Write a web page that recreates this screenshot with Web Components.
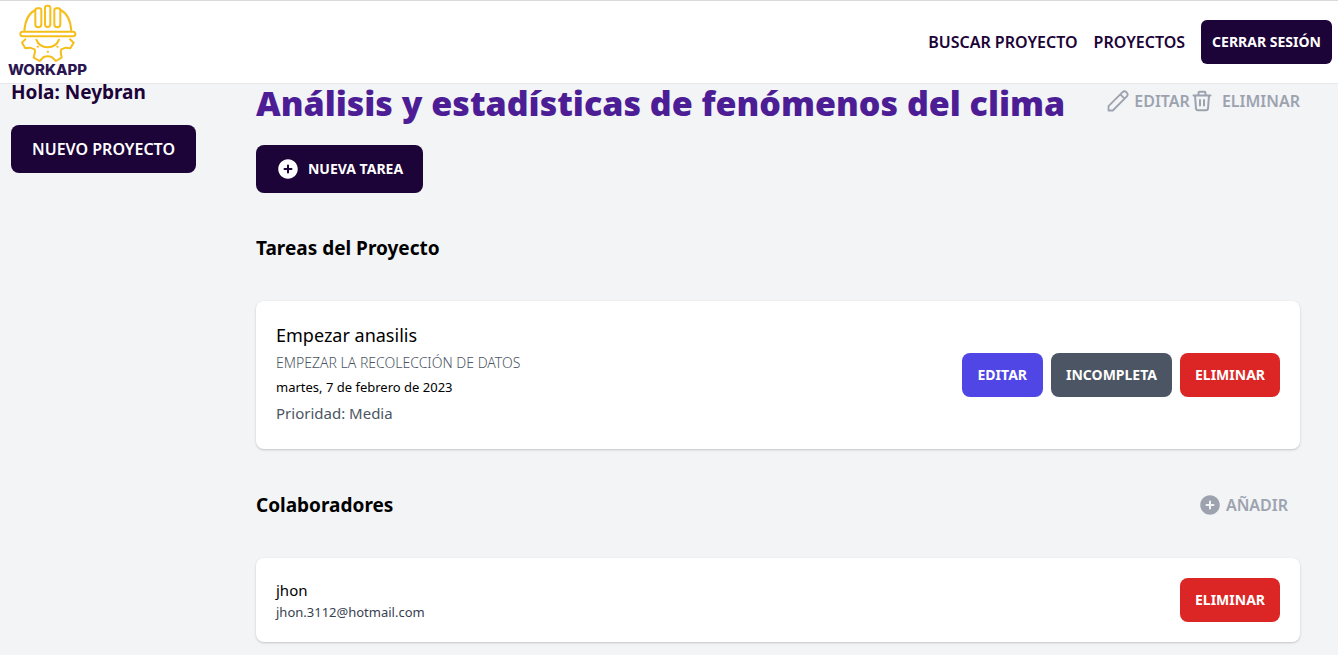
<!DOCTYPE html>
<html lang="es">
<head>
<meta charset="utf-8">
<meta name="viewport" content="width=device-width, initial-scale=1">
<title>WorkApp</title>
<style>
  body { margin: 0; background: #f3f4f6; color: #000; font-family: "Noto Sans", "Open Sans", sans-serif; font-size: 16px; line-height: 24px; }
</style>
</head>
<body>
<work-page></work-page>

<script>
const define = (name, html) => {
  const template = document.createElement('template');
  template.innerHTML = '<style>*{box-sizing:border-box}h1,h2,p{margin:0}button{font-family:inherit;border:0;cursor:pointer}</style>' + html;
  customElements.define(name, class extends HTMLElement {
    constructor() {
      super();
      this.attachShadow({ mode: 'open' }).append(template.content.cloneNode(true));
    }
  });
};

define('work-logo', `
<style>
  :host { display: block; padding-bottom: 4px; }
  a { display: flex; flex-direction: column; align-items: center; color: #2a1650; text-decoration: none; font: 800 15px/12px Inter, sans-serif; }
  svg { display: block; }
</style>
<a href="#">
  <svg width="60" height="60" viewBox="54 12 180 180" fill="none" stroke="#f5be1b" stroke-width="6" stroke-linecap="round" stroke-linejoin="round" aria-hidden="true">
    <rect x="61" y="95" width="165" height="14" rx="7"/>
    <path d="M73 93C75 64 86 40 106 30M182 30C202 40 212 64 214 93"/>
    <path d="M106 73V31Q106 25 112 25H118Q124 25 124 31V73A9 9 0 0 1 106 73ZM135 73V23Q135 17 143 17Q151 17 151 23V73A8 8 0 0 1 135 73ZM163 73V31Q163 25 169 25H175Q181 25 181 31V73A9 9 0 0 1 163 73Z"/>
    <path d="M76 118L66 128L76 145L90 143L104 148L105 156L101 173L119 183L131 171Q143 166 155 171L168 183L185 173L182 156L184 148L197 143L211 145L221 128L210 118"/>
    <path d="M109 119C120 149 166 149 177 119M113 140H114M143 155H144M172 140H173"/>
  </svg>
  <span>WORKAPP</span>
</a>`);

define('work-header', `
<style>
  header { display: flex; justify-content: space-between; align-items: center; height: 84px; padding: 0 6px 0 8px; background: #fff; border-top: 1px solid #d9d9d9; border-bottom: 1px solid #e5e7eb; }
  nav { display: flex; align-items: center; gap: 16px; }
  a { color: #1c0338; font-weight: 600; text-decoration: none; text-transform: uppercase; }
</style>
<header>
  <work-logo></work-logo>
  <nav>
    <a href="#">Buscar Proyecto</a>
    <a href="#">Proyectos</a>
    <work-button class="compact">Cerrar Sesión</work-button>
  </nav>
</header>`);

define('work-button', `
<style>
  :host { display: block; --bg: #1c0338; --pad: 12px 16px; --size: 14px; --weight: 700; --radius: 8px; }
  :host(.compact) { --pad: 12px 11px; --radius: 6px; }
  :host(.wide) { --pad: 12px 20px; --size: 16px; --weight: 600; }
  :host(.tall) { --pad: 12px 20px; }
  :host(.indigo) { --bg: #4f46e5; }
  :host(.slate) { --bg: #4b5563; --pad: 12px 15px; }
  :host(.red) { --bg: #dc2626; --pad: 12px 15px; }
  button { display: flex; align-items: center; justify-content: center; gap: 8px; width: 100%; padding: var(--pad); background: var(--bg); color: #fff; border-radius: var(--radius); font-size: var(--size); font-weight: var(--weight); line-height: 20px; text-transform: uppercase; white-space: nowrap; }
  :host(.wide) button { line-height: 24px; }
</style>
<button type="button"><slot name="icon"></slot><slot></slot></button>`);

define('work-action', `
<style>
  :host { display: block; }
  button { display: flex; align-items: center; gap: var(--gap, 4px); padding: 0; background: none; color: #9ca3af; font-size: 16px; font-weight: 600; line-height: 24px; text-transform: uppercase; }
</style>
<button type="button"><slot name="icon"></slot><slot></slot></button>`);

define('icon-plus', `
<style>:host, svg { display: block; }</style>
<svg width="24" height="24" viewBox="0 0 24 24" fill="currentColor" aria-hidden="true"><path fill-rule="evenodd" d="M12 2.25c-5.385 0-9.75 4.365-9.75 9.75s4.365 9.75 9.75 9.75 9.75-4.365 9.75-9.75S17.385 2.25 12 2.25zM13 8.5a1 1 0 00-2 0V11H8.5a1 1 0 000 2H11v2.5a1 1 0 002 0V13h2.5a1 1 0 000-2H13V8.5z" clip-rule="evenodd"/></svg>`);

define('icon-pencil', `
<style>:host, svg { display: block; }</style>
<svg width="24" height="24" viewBox="0 0 24 24" fill="none" stroke="currentColor" stroke-width="1.8" stroke-linejoin="round" aria-hidden="true"><path d="M2.5 21.500V17.200L16.300 3.300A2.900 2.900 0 0 1 20.600 7.600L6.800 21.500ZM14.300 5.300L18.600 9.600"/></svg>`);

define('icon-trash', `
<style>:host, svg { display: block; }</style>
<svg width="24" height="24" viewBox="0 0 24 24" fill="none" stroke="currentColor" stroke-width="2" stroke-linecap="round" stroke-linejoin="round" aria-hidden="true"><path d="M3.500 6.500H20.500M5 6.500L6 19.500Q6.200 21.200 8 21.200H16Q17.800 21.200 18 19.500L19 6.500M8.500 6.500V4Q8.500 2.800 9.700 2.800H14.300Q15.500 2.800 15.500 4V6.500M10 11V16.500M14 11V16.500"/></svg>`);

define('work-sidebar', `
<style>
  :host { display: block; padding-left: 11px; }
  p { font-size: 19px; font-weight: 700; line-height: 17px; color: #1c0338; }
  work-button { width: 185px; margin-top: 24px; }
</style>
<aside>
  <p>Hola: <slot></slot></p>
  <work-button class="wide">Nuevo Proyecto</work-button>
</aside>`);

define('work-section-title', `
<style>
  :host { display: flex; justify-content: space-between; align-items: center; height: 28px; padding-right: 12px; }
  h2 { font-size: 19px; font-weight: 700; line-height: 28px; }
</style>
<h2><slot></slot></h2><slot name="action"></slot>`);

define('work-card', `
<style>
  :host { display: flex; justify-content: space-between; align-items: center; gap: 16px; padding: 20px; background: #fff; border-radius: 8px; box-shadow: 0 1px 3px rgba(0,0,0,.1), 0 1px 2px rgba(0,0,0,.1); }
  .actions { display: flex; gap: 8px; }
</style>
<div><slot></slot></div>
<div class="actions"><slot name="actions"></slot></div>`);

define('work-task', `
<style>
  :host { display: block; }
  p { margin-bottom: 4px; }
  .name { font-size: 18px; line-height: 28px; }
  .detail { font-size: 14px; font-weight: 300; line-height: 20px; color: #4b5563; text-transform: uppercase; }
  .date { font-size: 13px; line-height: 20px; }
  .priority { font-size: 15px; line-height: 24px; color: #4b5563; }
</style>
<work-card>
  <p class="name"><slot name="name"></slot></p>
  <p class="detail"><slot name="detail"></slot></p>
  <p class="date"><slot name="date"></slot></p>
  <p class="priority">Prioridad: <slot name="priority"></slot></p>
  <work-button slot="actions" class="indigo">Editar</work-button>
  <work-button slot="actions" class="slate">Incompleta</work-button>
  <work-button slot="actions" class="red">Eliminar</work-button>
</work-card>`);

define('work-collaborator', `
<style>
  :host { display: block; }
  .name { font-size: 15px; line-height: 24px; }
  .mail { font-size: 13px; line-height: 20px; color: #374151; }
</style>
<work-card>
  <p class="name"><slot name="name"></slot></p>
  <p class="mail"><slot name="mail"></slot></p>
  <work-button slot="actions" class="red">Eliminar</work-button>
</work-card>`);

define('work-project', `
<style>
  :host { display: block; }
  .top { display: flex; justify-content: space-between; align-items: flex-start; height: 38px; }
  h1 { font-size: 34px; font-weight: 900; line-height: 38px; color: #4c1d95; }
  .actions { display: flex; padding-top: 5px; }
  .new { width: 167px; margin: 23px 0 41px; }
  .tasks { margin: 39px 0 42px; }
  .people { margin-top: 39px; }
</style>
<div class="top">
  <h1><slot></slot></h1>
  <div class="actions">
    <work-action><icon-pencil slot="icon"></icon-pencil>Editar</work-action>
    <work-action style="--gap: 8px"><icon-trash slot="icon"></icon-trash>Eliminar</work-action>
  </div>
</div>
<work-button class="tall new"><icon-plus slot="icon"></icon-plus>Nueva Tarea</work-button>
<work-section-title>Tareas del Proyecto</work-section-title>
<work-task class="tasks">
  <span slot="name">Empezar anasilis</span>
  <span slot="detail">Empezar la recolección de datos</span>
  <span slot="date">martes, 7 de febrero de 2023</span>
  <span slot="priority">Media</span>
</work-task>
<work-section-title>Colaboradores
  <work-action slot="action"><icon-plus slot="icon"></icon-plus>Añadir</work-action>
</work-section-title>
<work-collaborator class="people">
  <span slot="name">jhon</span>
  <span slot="mail">jhon.3112@hotmail.com</span>
</work-collaborator>`);

define('work-page', `
<style>
  :host { display: block; }
  .layout { display: grid; grid-template-columns: 256px minmax(0, 1fr); padding-right: 38px; padding-bottom: 12px; }
</style>
<work-header></work-header>
<div class="layout">
  <work-sidebar>Neybran</work-sidebar>
  <main><work-project>Análisis y estadísticas de fenómenos del clima</work-project></main>
</div>`);
</script>
</body>
</html>
